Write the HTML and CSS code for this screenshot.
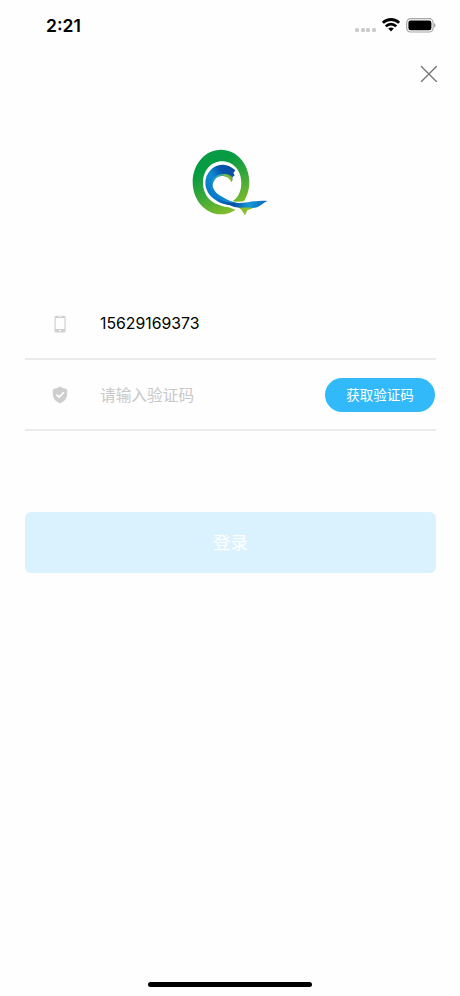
FILE: index.html
```html
<!DOCTYPE html>
<html lang="zh-CN">
<head>
<meta charset="utf-8">
<meta name="viewport" content="width=device-width, initial-scale=1">
<title>登录</title>
<link rel="stylesheet" href="styles.css">
</head>
<body>
<div class="screen">
  <header class="status">
    <span class="time">2:21</span>
    <div class="indicators">
      <span class="dots"><i></i><i></i><i></i><i></i></span>
      <svg class="wifi" viewBox="0 0 18 14" fill="none" stroke="#000" stroke-width="2.8">
        <path d="M0.9 4.8C5.3 0.4 12.7 0.4 17.1 4.8"/>
        <path d="M3.8 8.4C6.7 5.3 11.3 5.3 14.2 8.4"/>
        <path d="M6.2 10.6Q9 8.2 11.8 10.6L9 13.4Z" fill="#000" stroke="none"/>
      </svg>
      <svg class="battery" viewBox="0 0 30 15">
        <rect x="0.7" y="0.7" width="26.4" height="13.3" rx="4" fill="none" stroke="#a5a5a5" stroke-width="1.2"/>
        <rect x="2.4" y="2.4" width="23" height="9.9" rx="2.3"/>
        <path d="M28 5.2Q29.5 5.8 29.5 7.4T28 9.6Z" fill="#a5a5a5"/>
      </svg>
    </div>
  </header>
  <div class="nav">
    <button class="close" aria-label="关闭">
      <svg viewBox="0 0 18 18" stroke="#777" stroke-width="1.35" stroke-linecap="round"><path d="M1.4 1.4L16.4 16.4M16.4 1.4L1.4 16.4"/></svg>
    </button>
  </div>
  <svg class="logo" viewBox="0 0 300 255">
    <defs>
      <linearGradient id="ring" x1="0.25" y1="0" x2="0.7" y2="1">
        <stop offset="0.25" stop-color="#079b43"/><stop offset="0.55" stop-color="#35a63b"/><stop offset="0.95" stop-color="#83bd29"/>
      </linearGradient>
      <linearGradient id="wave" x1="75" y1="150" x2="170" y2="85" gradientUnits="userSpaceOnUse">
        <stop offset="0" stop-color="#0876c4"/><stop offset="0.35" stop-color="#128bd4"/><stop offset="0.65" stop-color="#0754ac"/><stop offset="1" stop-color="#0b4aa2"/>
      </linearGradient>
      <linearGradient id="curl" x1="94" y1="135" x2="160" y2="105" gradientUnits="userSpaceOnUse">
        <stop offset="0" stop-color="#0789d0"/><stop offset="0.45" stop-color="#45b3a6"/><stop offset="0.8" stop-color="#82bd2b"/><stop offset="1" stop-color="#4c9c42"/>
      </linearGradient>
      <linearGradient id="tail" x1="105" y1="180" x2="262" y2="185" gradientUnits="userSpaceOnUse">
        <stop offset="0" stop-color="#0876c4"/><stop offset="0.35" stop-color="#074da5"/><stop offset="0.65" stop-color="#1598d5"/><stop offset="1" stop-color="#0b62b5"/>
      </linearGradient>
    </defs>
    <path fill="url(#ring)" fill-rule="evenodd" d="M123 29C170 29 208 72 208 126S170 223 123 223S38 180 38 126S76 29 123 29ZM126 64C93 64 69 92 69 128C69 166 96 195 130 195C146 195 154 190 161 181C176 170 184 151 184 128C184 91 159 64 126 64Z"/>
    <path fill="#fff" d="M72 146C84 183 112 197 146 202L184 216L202 228L220 201L207 183L169 185C137 184 112 168 100 148Z"/>
    <path fill="url(#wave)" d="M166 91L160 99L164 106L157 112L157 122C139 103 113 105 101 120C90 139 106 160 124 169C138 177 150 185 172 189L160 195C110 192 79 167 76 131C75 99 99 75 127 74C141 73 153 80 166 91Z"/>
    <path fill="url(#curl)" d="M156 127L157 111L152 107C136 98 111 102 99 117C91 130 91 143 96 153C95 137 100 117 117 109C131 104 146 112 152 123Z"/>
    <path fill="#8abe2c" d="M148 196C164 194 174 202 184 209L195 226L202 211L215 206L217 199L240 195L184 190Z"/>
    <path fill="url(#tail)" d="M96 166C118 181 141 189 169 189C203 191 225 179 263 183C246 189 242 202 219 204C190 200 175 208 150 196C125 193 107 184 96 166Z"/>
  </svg>
  <main class="form">
    <div class="field phone">
      <svg class="icon" viewBox="0 0 18 18"><path fill="#d0d0d0" fill-rule="evenodd" d="M5 .8H13Q14.7 .8 14.7 2.5V15.7Q14.7 17.4 13 17.4H5Q3.5 17.4 3.5 15.7V2.5Q3.5 .8 5 .8ZM4.7 3V14H13.5V3ZM7 1.6V2.1H11V1.6ZM8 15V16.3H10V15Z"/></svg>
      <span class="number">15629169373</span>
    </div>
    <div class="field code">
      <svg class="icon" viewBox="0 0 18 18"><path fill="#cecece" d="M9 .5Q12 2.8 16.2 3V7.5C16.2 12.5 13.5 15.4 9 17.4C4.5 15.4 1.8 12.5 1.8 7.5V3Q6 2.8 9 .5Z"/><path d="M5.4 8.6L8.1 11.1L13 6.3" fill="none" stroke="#fff" stroke-width="1.6"/></svg>
      <span class="placeholder">请输入验证码</span>
      <button class="send">获取验证码</button>
    </div>
    <button class="login">登录</button>
  </main>
  <div class="home"></div>
</div>
</body>
</html>
```
FILE: styles.css
```css
* { box-sizing: border-box; }
body { margin: 0; background: #fff; font-family: Inter, "Noto Sans CJK SC", sans-serif; color: #000; }
button { border: 0; padding: 0; font-family: inherit; }
svg { display: block; }
.screen { width: 460px; height: 996px; display: flex; flex-direction: column; background: #fefefe; }
.status { height: 50px; display: flex; justify-content: space-between; padding: 0 24px 0 46px; }
.time { font-size: 17.5px; font-weight: 600; line-height: 52px; }
.indicators { display: flex; align-items: flex-start; padding-top: 18px; }
.dots { display: flex; gap: 1.6px; padding: 10px 6px 0 0; }
.dots i { width: 4px; height: 4px; border-radius: 1.5px; background: #cbcbcb; }
.wifi { width: 18px; height: 14px; margin-right: 6px; }
.battery { width: 30px; height: 15px; }
.nav { height: 90px; display: flex; justify-content: flex-end; align-items: flex-start; padding: 15px 22px 0 0; }
.close { width: 18px; height: 18px; background: none; }
.logo { width: 100px; height: 85px; margin-left: 180px; }
.form { margin: 64px 24px 0 25px; }
.field { height: 71px; display: flex; align-items: center; padding-left: 25.5px; border-bottom: 2px solid #ebebeb; }
.icon { width: 18px; height: 18px; margin-right: 31.5px; }
.number { font-size: 15.8px; line-height: 20px; }
.placeholder { font-size: 15.7px; font-weight: 400; line-height: 24px; color: #c8c8c8; flex: 1; padding-top: 2px; }
.send { width: 110px; height: 34px; border-radius: 17px; background: #32b9f9; color: #fff; font-size: 13.5px; line-height: 34px; margin-right: 1px; }
.login { display: block; width: 411px; height: 61px; margin-top: 80.5px; border-radius: 6px; background: #daf2fe; color: #fff; font-size: 17.5px; line-height: 61px; }
.home { width: 164px; height: 5px; border-radius: 3px; background: #000; margin: auto auto 9px; }
```
